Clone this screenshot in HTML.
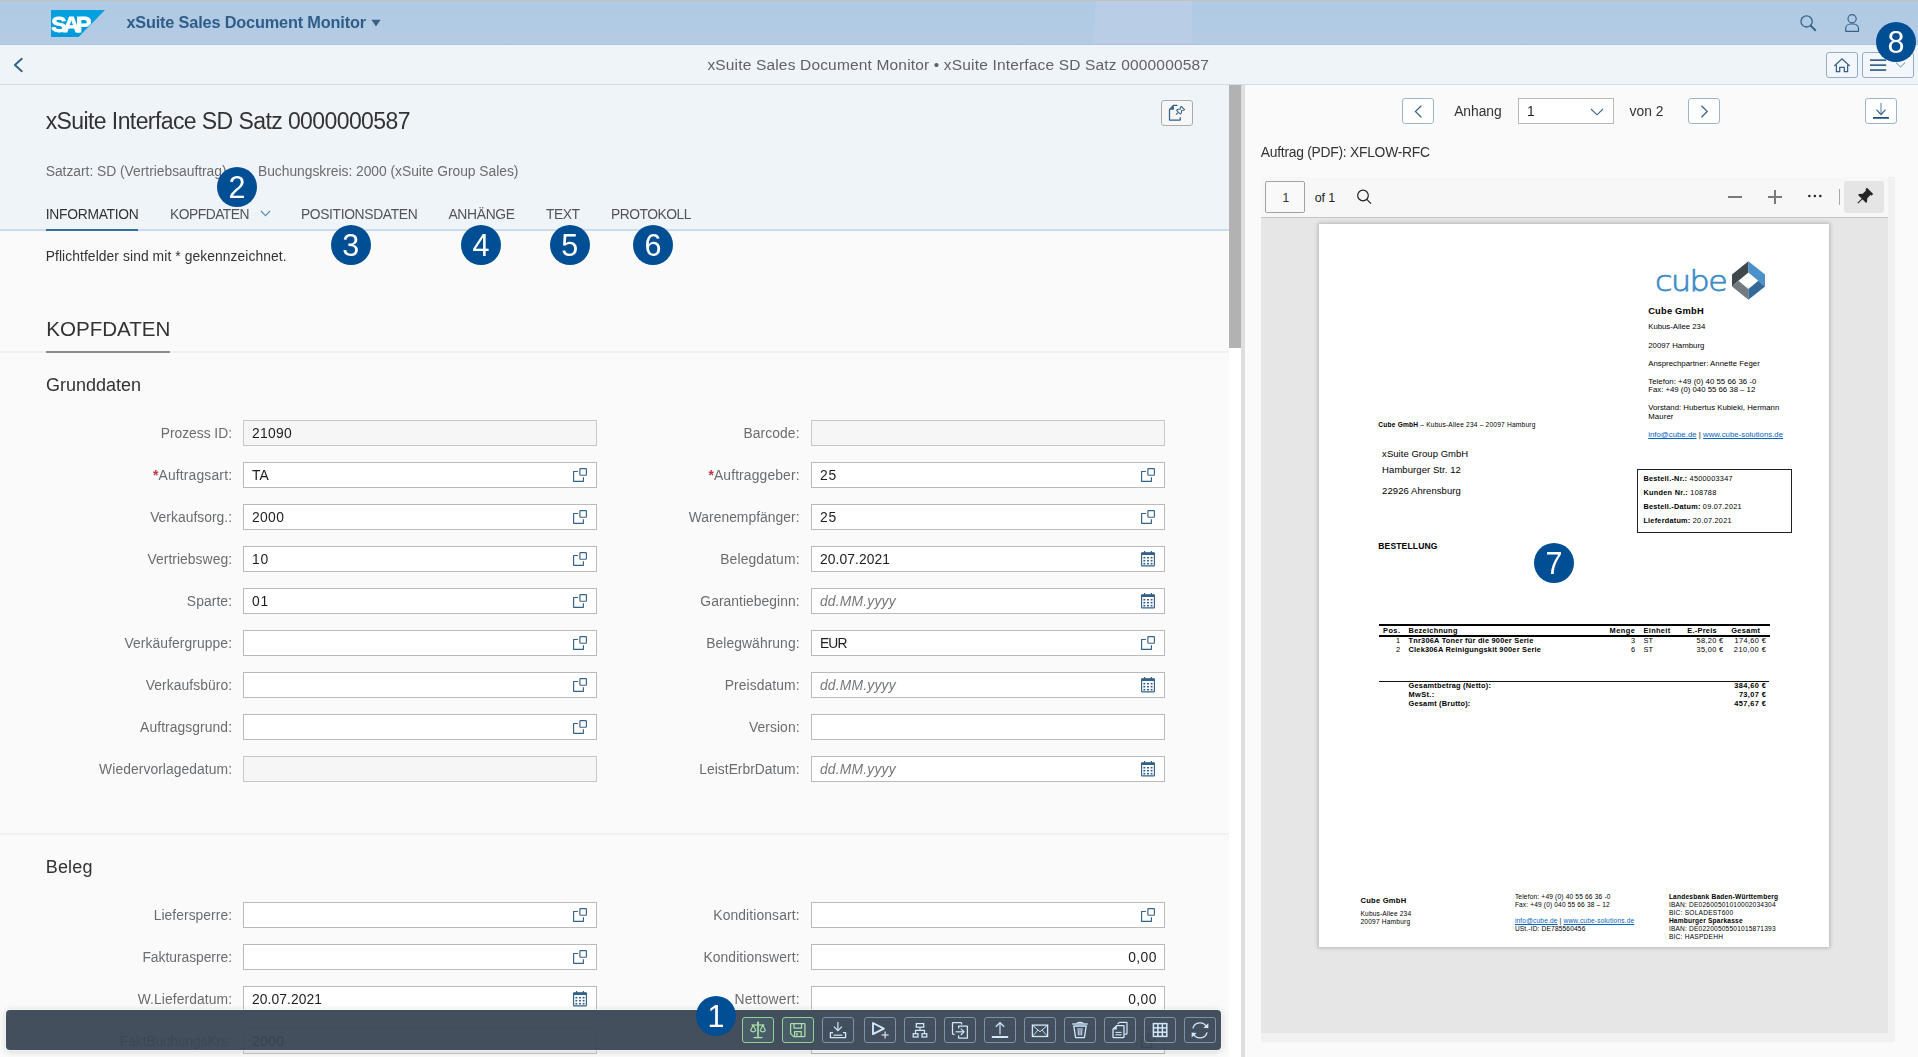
<!DOCTYPE html>
<html lang="de">
<head>
<meta charset="utf-8">
<title>xSuite Sales Document Monitor</title>
<style>
html,body{margin:0;padding:0}
body{width:1918px;height:1057px;overflow:hidden;position:relative;background:#fafafa;font-family:"Liberation Sans",Arial,sans-serif;color:#333;font-size:14px}
div,svg,.t,header,section,footer,nav,h1,h2,h3,label,a,button{position:absolute;margin:0;padding:0;box-sizing:border-box}
.t{white-space:nowrap;font-weight:400}
.btn{border:1px solid #93adc8;border-radius:3px;background:#f3f7fb}
.btn.w{background:#fff;border-color:#9db5cd}
.inp{border:1px solid #bababa;background:#fff}
.inp.ro{background:#f6f6f6;border-color:#c8c8c8}
.lbl{color:#6a6d70}
.val{color:#1d1d1d}
.ph{color:#74777a;font-style:italic}
.badge{border-radius:50%;background:#004e94;width:40px;height:40px}
.badge .t{color:#fff}
svg{overflow:visible}
.ui{left:0;top:0;width:1918px;height:1057px;will-change:transform}
.tb{border:1px solid #7d92a6;border-radius:3px}
.tb.g{border-color:#8dd28e;background:#4a5b68}
</style>
</head>
<body>
<div class="ui">
<header style="left:0;top:0;width:1918px;height:45px;background:linear-gradient(#afcae4,#b4cbe3);border-bottom:1px solid #abc5e1">
<div style="left:0;top:0;width:1918px;height:1px;background:#c3c1bf"></div>
<svg style="left:1080px;top:1px" width="120" height="43" viewBox="0 0 120 43"><polygon points="16.2,0 111.6,0 112.7,43 12.8,43" fill="#b9cee6"/></svg>
<svg style="left:51px;top:10px" width="54" height="27" viewBox="0 0 54 27"><defs><linearGradient id="sapg" x1="0" y1="0" x2="0" y2="1"><stop offset="0" stop-color="#00a1e0"/><stop offset="1" stop-color="#009ad9"/></linearGradient></defs><polygon points="0,0 54,0 27.6,27 0,27" fill="url(#sapg)"/><text x="0.2" y="22.1" font-family="Liberation Sans, Arial, sans-serif" font-weight="700" font-size="22.6" fill="#fff" textLength="36.6" lengthAdjust="spacingAndGlyphs" letter-spacing="-3.6" stroke="#fff" stroke-width="0.8">SAP</text></svg>
</header>
<span class="t" style="top:12.00px;font-size:16.3px;line-height:21px;left:126.40px;color:#2f5d87;font-weight:700;letter-spacing:-0.166px;">xSuite Sales Document Monitor</span>
<svg style="left:371px;top:19px" width="10" height="8" viewBox="0 0 10 8"><polygon points="0.4,0.8 9.6,0.8 5,7.4" fill="#346187"/></svg>
<svg style="left:1800px;top:15px" width="16" height="16" viewBox="0 0 16 16"><circle cx="6.6" cy="6.4" r="5.6" fill="none" stroke="#346187" stroke-width="1.3"/><line x1="10.6" y1="10.6" x2="15.3" y2="15.2" stroke="#346187" stroke-width="1.9" stroke-linecap="round"/></svg>
<svg style="left:1845px;top:14px" width="15" height="18" viewBox="0 0 15 18"><circle cx="7.1" cy="4.7" r="4.1" fill="none" stroke="#346187" stroke-width="1.15"/><path d="M0.7,17.3 V14.6 A4.6,4.6 0 0 1 5.3,10 H8.9 A4.6,4.6 0 0 1 13.5,14.6 V17.3 Z" fill="none" stroke="#346187" stroke-width="1.15" stroke-linejoin="round"/></svg>
<div style="left:0;top:45px;width:1918px;height:40px;background:#eff4f9;border-bottom:1px solid #d0deec"></div>
<svg style="left:13px;top:57px" width="11" height="16" viewBox="0 0 11 16"><polyline points="8.8,1.8 1.9,8 8.8,14.2" fill="none" stroke="#346187" stroke-width="1.9" stroke-linecap="round" stroke-linejoin="round"/></svg>
<span class="t" style="top:55.00px;font-size:15.5px;line-height:20px;left:707.40px;color:#5f6266;letter-spacing:0.167px;">xSuite Sales Document Monitor • xSuite Interface SD Satz 0000000587</span>
<div class="btn" style="left:1826px;top:52px;width:32px;height:26px"><svg style="left:7px;top:5px" width="16" height="15" viewBox="0 0 16 15"><polyline points="0.3,8 8,0.9 15.7,8" fill="none" stroke="#346187" stroke-width="1.25" stroke-linejoin="miter"/><path d="M2.4,6.9 V13.5 H5.7 V9.3 H10.3 V13.5 H13.6 V6.9" fill="none" stroke="#346187" stroke-width="1.25"/></svg></div>
<div class="btn" style="left:1862px;top:52px;width:52px;height:26px"><svg style="left:7px;top:5px" width="36" height="14" viewBox="0 0 36 14"><rect x="0" y="1.3" width="16.2" height="1.7" fill="#346187"/><rect x="0" y="6.3" width="16.2" height="1.7" fill="#346187"/><rect x="0" y="11.2" width="16.2" height="1.7" fill="#346187"/><polyline points="26,4.6 30.5,9 35,4.6" fill="none" stroke="#5b87b0" stroke-width="1"/></svg></div>
<section style="left:0;top:85px;width:1229px;height:146px;background:#eff4f9;border-bottom:2px solid #cddcec"></section>
<h1 class="t" style="top:106.00px;font-size:23px;line-height:30px;left:45.70px;color:#333;letter-spacing:-0.590px;">xSuite Interface SD Satz 0000000587</h1>
<div class="btn" style="left:1161px;top:100px;width:32px;height:26px;border-color:#ababab;background:#f7f7f7"><svg style="left:4px;top:3px" width="20" height="18" viewBox="0 0 20 18"><path d="M11,1.3 H7.6 L3.5,5.4 V16 H14.2 V13.6" fill="none" stroke="#346187" stroke-width="1.25" stroke-linejoin="round" stroke-linecap="round"/><polygon points="7.9,1.6 7.9,5.7 3.8,5.7" fill="#346187"/><path d="M15.3,2.3 L18.6,5.6 L17.4,6.2 L15.6,6.4 L15.3,9.2 L14.2,10 L10.6,6.4 L11.4,5.4 L14.2,5.1 L14.5,3.3 Z" fill="none" stroke="#346187" stroke-width="1.05" stroke-linejoin="round"/><line x1="12.3" y1="8.3" x2="10" y2="10.6" stroke="#346187" stroke-width="1.1"/></svg></div>
<span class="t" style="top:162.00px;font-size:13.85px;line-height:18px;left:45.70px;color:#6a6d70;letter-spacing:-0.024px;">Satzart: SD (Vertriebsauftrag)</span>
<span class="t" style="top:162.00px;font-size:13.85px;line-height:18px;left:258.00px;color:#6a6d70;letter-spacing:-0.032px;">Buchungskreis: 2000 (xSuite Group Sales)</span>
<span class="t" style="top:205.00px;font-size:13.85px;line-height:18px;left:45.70px;color:#333;letter-spacing:-0.269px;">INFORMATION</span>
<span class="t" style="top:205.00px;font-size:13.85px;line-height:18px;left:169.90px;color:#515559;letter-spacing:-0.489px;">KOPFDATEN</span>
<span class="t" style="top:205.00px;font-size:13.85px;line-height:18px;left:300.90px;color:#515559;letter-spacing:-0.346px;">POSITIONSDATEN</span>
<span class="t" style="top:205.00px;font-size:13.85px;line-height:18px;left:448.40px;color:#515559;letter-spacing:-0.297px;">ANHÄNGE</span>
<span class="t" style="top:205.00px;font-size:13.85px;line-height:18px;left:546.10px;color:#515559;letter-spacing:-0.535px;">TEXT</span>
<span class="t" style="top:205.00px;font-size:13.85px;line-height:18px;left:611.10px;color:#515559;letter-spacing:-0.511px;">PROTOKOLL</span>
<div style="left:46px;top:229px;width:92px;height:2px;background:#306ea6"></div>
<svg style="left:260px;top:210px" width="11" height="7" viewBox="0 0 11 7"><polyline points="1,1 5.5,5.6 10,1" fill="none" stroke="#5b87b0" stroke-width="1.1"/></svg>
<span class="t" style="top:247.00px;font-size:13.85px;line-height:18px;left:45.70px;color:#333;letter-spacing:0.080px;">Pflichtfelder sind mit * gekennzeichnet.</span>
<h2 class="t" style="top:315.00px;font-size:20.6px;line-height:27px;left:46.30px;color:#333;letter-spacing:-0.023px;">KOPFDATEN</h2>
<div style="left:0;top:351px;width:1229px;height:2px;background:#f0f0f0"></div>
<div style="left:46px;top:351px;width:124px;height:2px;background:#8a8a8a"></div>
<h3 class="t" style="top:374.00px;font-size:18px;line-height:23px;left:46.10px;color:#333;letter-spacing:-0.020px;">Grunddaten</h3>
<label class="t lbl" style="top:424.00px;font-size:13.85px;line-height:18px;right:1686.03px;letter-spacing:-0.026px;">Prozess ID:</label>
<div class="inp ro" style="left:243px;top:420px;width:354px;height:26px"></div>
<span class="t val" style="top:424.00px;font-size:13.85px;line-height:18px;left:251.90px;letter-spacing:0.321px;">21090</span>
<label class="t lbl" style="top:466.00px;font-size:13.85px;line-height:18px;right:1685.82px;letter-spacing:0.178px;"><span style="color:#c0393b;font-weight:700">*</span>Auftragsart:</label>
<div class="inp" style="left:243px;top:462px;width:354px;height:26px"><svg style="left:329.2px;top:5px" width="14" height="14" viewBox="0 0 14 14"><rect x="6.9" y="0.6" width="6.5" height="6.6" fill="none" stroke="#346187" stroke-width="1.15" rx="0.6"/><path d="M5,3.5 H0.6 V13.3 H10.4 V9.2" fill="none" stroke="#346187" stroke-width="1.15" stroke-linejoin="round"/></svg></div>
<span class="t val" style="top:466.00px;font-size:13.85px;line-height:18px;left:251.90px;letter-spacing:0.213px;">TA</span>
<label class="t lbl" style="top:508.00px;font-size:13.85px;line-height:18px;right:1685.97px;letter-spacing:0.026px;">Verkaufsorg.:</label>
<div class="inp" style="left:243px;top:504px;width:354px;height:26px"><svg style="left:329.2px;top:5px" width="14" height="14" viewBox="0 0 14 14"><rect x="6.9" y="0.6" width="6.5" height="6.6" fill="none" stroke="#346187" stroke-width="1.15" rx="0.6"/><path d="M5,3.5 H0.6 V13.3 H10.4 V9.2" fill="none" stroke="#346187" stroke-width="1.15" stroke-linejoin="round"/></svg></div>
<span class="t val" style="top:508.00px;font-size:13.85px;line-height:18px;left:251.90px;letter-spacing:0.391px;">2000</span>
<label class="t lbl" style="top:550.00px;font-size:13.85px;line-height:18px;right:1685.94px;letter-spacing:0.059px;">Vertriebsweg:</label>
<div class="inp" style="left:243px;top:546px;width:354px;height:26px"><svg style="left:329.2px;top:5px" width="14" height="14" viewBox="0 0 14 14"><rect x="6.9" y="0.6" width="6.5" height="6.6" fill="none" stroke="#346187" stroke-width="1.15" rx="0.6"/><path d="M5,3.5 H0.6 V13.3 H10.4 V9.2" fill="none" stroke="#346187" stroke-width="1.15" stroke-linejoin="round"/></svg></div>
<span class="t val" style="top:550.00px;font-size:13.85px;line-height:18px;left:251.90px;letter-spacing:0.979px;">10</span>
<label class="t lbl" style="top:592.00px;font-size:13.85px;line-height:18px;right:1685.91px;letter-spacing:0.091px;">Sparte:</label>
<div class="inp" style="left:243px;top:588px;width:354px;height:26px"><svg style="left:329.2px;top:5px" width="14" height="14" viewBox="0 0 14 14"><rect x="6.9" y="0.6" width="6.5" height="6.6" fill="none" stroke="#346187" stroke-width="1.15" rx="0.6"/><path d="M5,3.5 H0.6 V13.3 H10.4 V9.2" fill="none" stroke="#346187" stroke-width="1.15" stroke-linejoin="round"/></svg></div>
<span class="t val" style="top:592.00px;font-size:13.85px;line-height:18px;left:251.90px;letter-spacing:0.979px;">01</span>
<label class="t lbl" style="top:634.00px;font-size:13.85px;line-height:18px;right:1685.92px;letter-spacing:0.084px;">Verkäufergruppe:</label>
<div class="inp" style="left:243px;top:630px;width:354px;height:26px"><svg style="left:329.2px;top:5px" width="14" height="14" viewBox="0 0 14 14"><rect x="6.9" y="0.6" width="6.5" height="6.6" fill="none" stroke="#346187" stroke-width="1.15" rx="0.6"/><path d="M5,3.5 H0.6 V13.3 H10.4 V9.2" fill="none" stroke="#346187" stroke-width="1.15" stroke-linejoin="round"/></svg></div>
<label class="t lbl" style="top:676.00px;font-size:13.85px;line-height:18px;right:1685.92px;letter-spacing:0.080px;">Verkaufsbüro:</label>
<div class="inp" style="left:243px;top:672px;width:354px;height:26px"><svg style="left:329.2px;top:5px" width="14" height="14" viewBox="0 0 14 14"><rect x="6.9" y="0.6" width="6.5" height="6.6" fill="none" stroke="#346187" stroke-width="1.15" rx="0.6"/><path d="M5,3.5 H0.6 V13.3 H10.4 V9.2" fill="none" stroke="#346187" stroke-width="1.15" stroke-linejoin="round"/></svg></div>
<label class="t lbl" style="top:718.00px;font-size:13.85px;line-height:18px;right:1685.92px;letter-spacing:0.083px;">Auftragsgrund:</label>
<div class="inp" style="left:243px;top:714px;width:354px;height:26px"><svg style="left:329.2px;top:5px" width="14" height="14" viewBox="0 0 14 14"><rect x="6.9" y="0.6" width="6.5" height="6.6" fill="none" stroke="#346187" stroke-width="1.15" rx="0.6"/><path d="M5,3.5 H0.6 V13.3 H10.4 V9.2" fill="none" stroke="#346187" stroke-width="1.15" stroke-linejoin="round"/></svg></div>
<label class="t lbl" style="top:760.00px;font-size:13.85px;line-height:18px;right:1685.93px;letter-spacing:0.073px;">Wiedervorlagedatum:</label>
<div class="inp ro" style="left:243px;top:756px;width:354px;height:26px"></div>
<label class="t lbl" style="top:424.00px;font-size:13.85px;line-height:18px;right:1118.41px;letter-spacing:0.095px;">Barcode:</label>
<div class="inp ro" style="left:811px;top:420px;width:354px;height:26px"></div>
<label class="t lbl" style="top:466.00px;font-size:13.85px;line-height:18px;right:1118.36px;letter-spacing:0.139px;"><span style="color:#c0393b;font-weight:700">*</span>Auftraggeber:</label>
<div class="inp" style="left:811px;top:462px;width:354px;height:26px"><svg style="left:329.2px;top:5px" width="14" height="14" viewBox="0 0 14 14"><rect x="6.9" y="0.6" width="6.5" height="6.6" fill="none" stroke="#346187" stroke-width="1.15" rx="0.6"/><path d="M5,3.5 H0.6 V13.3 H10.4 V9.2" fill="none" stroke="#346187" stroke-width="1.15" stroke-linejoin="round"/></svg></div>
<span class="t val" style="top:466.00px;font-size:13.85px;line-height:18px;left:819.90px;letter-spacing:0.879px;">25</span>
<label class="t lbl" style="top:508.00px;font-size:13.85px;line-height:18px;right:1118.47px;letter-spacing:0.035px;">Warenempfänger:</label>
<div class="inp" style="left:811px;top:504px;width:354px;height:26px"><svg style="left:329.2px;top:5px" width="14" height="14" viewBox="0 0 14 14"><rect x="6.9" y="0.6" width="6.5" height="6.6" fill="none" stroke="#346187" stroke-width="1.15" rx="0.6"/><path d="M5,3.5 H0.6 V13.3 H10.4 V9.2" fill="none" stroke="#346187" stroke-width="1.15" stroke-linejoin="round"/></svg></div>
<span class="t val" style="top:508.00px;font-size:13.85px;line-height:18px;left:819.90px;letter-spacing:0.879px;">25</span>
<label class="t lbl" style="top:550.00px;font-size:13.85px;line-height:18px;right:1118.33px;letter-spacing:0.165px;">Belegdatum:</label>
<div class="inp" style="left:811px;top:546px;width:354px;height:26px"><svg style="left:329px;top:4px" width="14" height="16" viewBox="0 0 14 16"><rect x="0.6" y="1.7" width="12.8" height="13.2" fill="none" stroke="#346187" stroke-width="1.15" rx="0.6"/><rect x="0.6" y="1.7" width="12.8" height="2.3" fill="#346187"/><rect x="3" y="0" width="1.2" height="2" fill="#346187"/><rect x="9.8" y="0" width="1.2" height="2" fill="#346187"/><rect x="2.4" y="5.9" width="1.9" height="1.6" fill="#346187"/><rect x="6.0" y="5.9" width="1.9" height="1.6" fill="#346187"/><rect x="9.6" y="5.9" width="1.9" height="1.6" fill="#346187"/><rect x="2.4" y="8.9" width="1.9" height="1.6" fill="#346187"/><rect x="6.0" y="8.9" width="1.9" height="1.6" fill="#346187"/><rect x="9.6" y="8.9" width="1.9" height="1.6" fill="#346187"/><rect x="2.4" y="11.9" width="1.9" height="1.6" fill="#346187"/><rect x="6.0" y="11.9" width="1.9" height="1.6" fill="#346187"/><rect x="9.6" y="11.9" width="1.9" height="1.6" fill="#346187"/></svg></div>
<span class="t val" style="top:550.00px;font-size:13.85px;line-height:18px;left:819.90px;letter-spacing:0.099px;">20.07.2021</span>
<label class="t lbl" style="top:592.00px;font-size:13.85px;line-height:18px;right:1118.45px;letter-spacing:0.048px;">Garantiebeginn:</label>
<div class="inp" style="left:811px;top:588px;width:354px;height:26px"><svg style="left:329px;top:4px" width="14" height="16" viewBox="0 0 14 16"><rect x="0.6" y="1.7" width="12.8" height="13.2" fill="none" stroke="#346187" stroke-width="1.15" rx="0.6"/><rect x="0.6" y="1.7" width="12.8" height="2.3" fill="#346187"/><rect x="3" y="0" width="1.2" height="2" fill="#346187"/><rect x="9.8" y="0" width="1.2" height="2" fill="#346187"/><rect x="2.4" y="5.9" width="1.9" height="1.6" fill="#346187"/><rect x="6.0" y="5.9" width="1.9" height="1.6" fill="#346187"/><rect x="9.6" y="5.9" width="1.9" height="1.6" fill="#346187"/><rect x="2.4" y="8.9" width="1.9" height="1.6" fill="#346187"/><rect x="6.0" y="8.9" width="1.9" height="1.6" fill="#346187"/><rect x="9.6" y="8.9" width="1.9" height="1.6" fill="#346187"/><rect x="2.4" y="11.9" width="1.9" height="1.6" fill="#346187"/><rect x="6.0" y="11.9" width="1.9" height="1.6" fill="#346187"/><rect x="9.6" y="11.9" width="1.9" height="1.6" fill="#346187"/></svg></div>
<span class="t ph" style="top:592.00px;font-size:13.85px;line-height:18px;left:819.90px;letter-spacing:0.205px;">dd.MM.yyyy</span>
<label class="t lbl" style="top:634.00px;font-size:13.85px;line-height:18px;right:1118.42px;letter-spacing:0.077px;">Belegwährung:</label>
<div class="inp" style="left:811px;top:630px;width:354px;height:26px"><svg style="left:329.2px;top:5px" width="14" height="14" viewBox="0 0 14 14"><rect x="6.9" y="0.6" width="6.5" height="6.6" fill="none" stroke="#346187" stroke-width="1.15" rx="0.6"/><path d="M5,3.5 H0.6 V13.3 H10.4 V9.2" fill="none" stroke="#346187" stroke-width="1.15" stroke-linejoin="round"/></svg></div>
<span class="t val" style="top:634.00px;font-size:13.85px;line-height:18px;left:819.90px;letter-spacing:-0.825px;">EUR</span>
<label class="t lbl" style="top:676.00px;font-size:13.85px;line-height:18px;right:1118.41px;letter-spacing:0.091px;">Preisdatum:</label>
<div class="inp" style="left:811px;top:672px;width:354px;height:26px"><svg style="left:329px;top:4px" width="14" height="16" viewBox="0 0 14 16"><rect x="0.6" y="1.7" width="12.8" height="13.2" fill="none" stroke="#346187" stroke-width="1.15" rx="0.6"/><rect x="0.6" y="1.7" width="12.8" height="2.3" fill="#346187"/><rect x="3" y="0" width="1.2" height="2" fill="#346187"/><rect x="9.8" y="0" width="1.2" height="2" fill="#346187"/><rect x="2.4" y="5.9" width="1.9" height="1.6" fill="#346187"/><rect x="6.0" y="5.9" width="1.9" height="1.6" fill="#346187"/><rect x="9.6" y="5.9" width="1.9" height="1.6" fill="#346187"/><rect x="2.4" y="8.9" width="1.9" height="1.6" fill="#346187"/><rect x="6.0" y="8.9" width="1.9" height="1.6" fill="#346187"/><rect x="9.6" y="8.9" width="1.9" height="1.6" fill="#346187"/><rect x="2.4" y="11.9" width="1.9" height="1.6" fill="#346187"/><rect x="6.0" y="11.9" width="1.9" height="1.6" fill="#346187"/><rect x="9.6" y="11.9" width="1.9" height="1.6" fill="#346187"/></svg></div>
<span class="t ph" style="top:676.00px;font-size:13.85px;line-height:18px;left:819.90px;letter-spacing:0.205px;">dd.MM.yyyy</span>
<label class="t lbl" style="top:718.00px;font-size:13.85px;line-height:18px;right:1118.42px;letter-spacing:0.079px;">Version:</label>
<div class="inp" style="left:811px;top:714px;width:354px;height:26px"></div>
<label class="t lbl" style="top:760.00px;font-size:13.85px;line-height:18px;right:1118.49px;letter-spacing:0.011px;">LeistErbrDatum:</label>
<div class="inp" style="left:811px;top:756px;width:354px;height:26px"><svg style="left:329px;top:4px" width="14" height="16" viewBox="0 0 14 16"><rect x="0.6" y="1.7" width="12.8" height="13.2" fill="none" stroke="#346187" stroke-width="1.15" rx="0.6"/><rect x="0.6" y="1.7" width="12.8" height="2.3" fill="#346187"/><rect x="3" y="0" width="1.2" height="2" fill="#346187"/><rect x="9.8" y="0" width="1.2" height="2" fill="#346187"/><rect x="2.4" y="5.9" width="1.9" height="1.6" fill="#346187"/><rect x="6.0" y="5.9" width="1.9" height="1.6" fill="#346187"/><rect x="9.6" y="5.9" width="1.9" height="1.6" fill="#346187"/><rect x="2.4" y="8.9" width="1.9" height="1.6" fill="#346187"/><rect x="6.0" y="8.9" width="1.9" height="1.6" fill="#346187"/><rect x="9.6" y="8.9" width="1.9" height="1.6" fill="#346187"/><rect x="2.4" y="11.9" width="1.9" height="1.6" fill="#346187"/><rect x="6.0" y="11.9" width="1.9" height="1.6" fill="#346187"/><rect x="9.6" y="11.9" width="1.9" height="1.6" fill="#346187"/></svg></div>
<span class="t ph" style="top:760.00px;font-size:13.85px;line-height:18px;left:819.90px;letter-spacing:0.205px;">dd.MM.yyyy</span>
<div style="left:0;top:833px;width:1229px;height:2px;background:#f1f1f1"></div>
<h3 class="t" style="top:856.00px;font-size:18px;line-height:23px;left:45.70px;color:#333;letter-spacing:0.188px;">Beleg</h3>
<label class="t lbl" style="top:906.00px;font-size:13.85px;line-height:18px;right:1685.95px;letter-spacing:0.047px;">Liefersperre:</label>
<div class="inp" style="left:243px;top:902px;width:354px;height:26px"><svg style="left:329.2px;top:5px" width="14" height="14" viewBox="0 0 14 14"><rect x="6.9" y="0.6" width="6.5" height="6.6" fill="none" stroke="#346187" stroke-width="1.15" rx="0.6"/><path d="M5,3.5 H0.6 V13.3 H10.4 V9.2" fill="none" stroke="#346187" stroke-width="1.15" stroke-linejoin="round"/></svg></div>
<label class="t lbl" style="top:948.00px;font-size:13.85px;line-height:18px;right:1686.03px;letter-spacing:-0.034px;">Fakturasperre:</label>
<div class="inp" style="left:243px;top:944px;width:354px;height:26px"><svg style="left:329.2px;top:5px" width="14" height="14" viewBox="0 0 14 14"><rect x="6.9" y="0.6" width="6.5" height="6.6" fill="none" stroke="#346187" stroke-width="1.15" rx="0.6"/><path d="M5,3.5 H0.6 V13.3 H10.4 V9.2" fill="none" stroke="#346187" stroke-width="1.15" stroke-linejoin="round"/></svg></div>
<label class="t lbl" style="top:990.00px;font-size:13.85px;line-height:18px;right:1685.90px;letter-spacing:0.098px;">W.Lieferdatum:</label>
<div class="inp" style="left:243px;top:986px;width:354px;height:26px"><svg style="left:329px;top:4px" width="14" height="16" viewBox="0 0 14 16"><rect x="0.6" y="1.7" width="12.8" height="13.2" fill="none" stroke="#346187" stroke-width="1.15" rx="0.6"/><rect x="0.6" y="1.7" width="12.8" height="2.3" fill="#346187"/><rect x="3" y="0" width="1.2" height="2" fill="#346187"/><rect x="9.8" y="0" width="1.2" height="2" fill="#346187"/><rect x="2.4" y="5.9" width="1.9" height="1.6" fill="#346187"/><rect x="6.0" y="5.9" width="1.9" height="1.6" fill="#346187"/><rect x="9.6" y="5.9" width="1.9" height="1.6" fill="#346187"/><rect x="2.4" y="8.9" width="1.9" height="1.6" fill="#346187"/><rect x="6.0" y="8.9" width="1.9" height="1.6" fill="#346187"/><rect x="9.6" y="8.9" width="1.9" height="1.6" fill="#346187"/><rect x="2.4" y="11.9" width="1.9" height="1.6" fill="#346187"/><rect x="6.0" y="11.9" width="1.9" height="1.6" fill="#346187"/><rect x="9.6" y="11.9" width="1.9" height="1.6" fill="#346187"/></svg></div>
<span class="t val" style="top:990.00px;font-size:13.85px;line-height:18px;left:251.90px;letter-spacing:0.099px;">20.07.2021</span>
<label class="t lbl" style="top:1032.00px;font-size:13.85px;line-height:18px;right:1686.06px;letter-spacing:-0.062px;">FaktBuchungsKrs:</label>
<div class="inp ro" style="left:243px;top:1028px;width:354px;height:26px"></div>
<span class="t val" style="top:1032.00px;font-size:13.85px;line-height:18px;left:251.90px;letter-spacing:0.391px;">2000</span>
<label class="t lbl" style="top:906.00px;font-size:13.85px;line-height:18px;right:1118.38px;letter-spacing:0.118px;">Konditionsart:</label>
<div class="inp" style="left:811px;top:902px;width:354px;height:26px"><svg style="left:329.2px;top:5px" width="14" height="14" viewBox="0 0 14 14"><rect x="6.9" y="0.6" width="6.5" height="6.6" fill="none" stroke="#346187" stroke-width="1.15" rx="0.6"/><path d="M5,3.5 H0.6 V13.3 H10.4 V9.2" fill="none" stroke="#346187" stroke-width="1.15" stroke-linejoin="round"/></svg></div>
<label class="t lbl" style="top:948.00px;font-size:13.85px;line-height:18px;right:1118.40px;letter-spacing:0.102px;">Konditionswert:</label>
<div class="inp" style="left:811px;top:944px;width:354px;height:26px"></div>
<span class="t val" style="top:948.00px;font-size:13.85px;line-height:18px;right:761.02px;letter-spacing:0.477px;">0,00</span>
<label class="t lbl" style="top:990.00px;font-size:13.85px;line-height:18px;right:1118.28px;letter-spacing:0.221px;">Nettowert:</label>
<div class="inp" style="left:811px;top:986px;width:354px;height:26px"></div>
<span class="t val" style="top:990.00px;font-size:13.85px;line-height:18px;right:761.02px;letter-spacing:0.477px;">0,00</span>
<div class="inp" style="left:811px;top:1028px;width:354px;height:26px"><svg style="left:329.2px;top:5px" width="14" height="14" viewBox="0 0 14 14"><rect x="6.9" y="0.6" width="6.5" height="6.6" fill="none" stroke="#346187" stroke-width="1.15" rx="0.6"/><path d="M5,3.5 H0.6 V13.3 H10.4 V9.2" fill="none" stroke="#346187" stroke-width="1.15" stroke-linejoin="round"/></svg></div>
<div style="left:1229px;top:85px;width:12px;height:972px;background:#fff"></div>
<div style="left:1229px;top:85px;width:12px;height:263px;background:#b2b2b2"></div>
<div style="left:1241px;top:85px;width:4px;height:972px;background:#dedede"></div>
<div class="btn w" style="left:1402px;top:98px;width:32px;height:26px"><svg style="left:11.2px;top:6px" width="9" height="13" viewBox="0 0 9 13"><polyline points="7.3,0.8 1.4,6.5 7.3,12.2" fill="none" stroke="#346187" stroke-width="1.2"/></svg></div>
<span class="t" style="top:102.00px;font-size:13.85px;line-height:18px;left:1454.20px;color:#333;letter-spacing:-0.050px;">Anhang</span>
<div class="inp" style="left:1518px;top:98px;width:96px;height:26px;border-color:#b8b8b8"><svg style="left:71px;top:9px" width="14" height="8" viewBox="0 0 14 8"><polyline points="1,1 7,6.8 13,1" fill="none" stroke="#346187" stroke-width="1.05"/></svg></div>
<span class="t" style="top:102.00px;font-size:13.85px;line-height:18px;left:1527.00px;color:#1d1d1d;">1</span>
<span class="t" style="top:102.00px;font-size:13.85px;line-height:18px;left:1629.40px;color:#333;letter-spacing:0.077px;">von 2</span>
<div class="btn w" style="left:1688px;top:98px;width:32px;height:26px"><svg style="left:10.6px;top:6px" width="9" height="13" viewBox="0 0 9 13"><polyline points="1.4,0.8 7.3,6.5 1.4,12.2" fill="none" stroke="#346187" stroke-width="1.2"/></svg></div>
<div class="btn w" style="left:1865px;top:98px;width:32px;height:26px"><svg style="left:7px;top:4px" width="16" height="16" viewBox="0 0 16 16"><line x1="8" y1="0" x2="8" y2="11.2" stroke="#346187" stroke-width="1.1" opacity="0.75"/><polyline points="3.9,7.1 8,11.6 12.1,7.1" fill="none" stroke="#346187" stroke-width="1.3" stroke-linecap="round"/><rect x="0" y="14.1" width="16" height="1.7" rx="0.5" fill="#1f4e79"/></svg></div>
<span class="t" style="top:143.00px;font-size:13.85px;line-height:18px;left:1260.80px;color:#333;letter-spacing:-0.258px;">Auftrag (PDF): XFLOW-RFC</span>
</div>
<div style="left:1261px;top:177px;width:627px;height:41px;background:#f7f7f7;border-bottom:1px solid #c6c6c6"></div>
<div style="left:1888px;top:177px;width:7px;height:864px;background:#f1f1f1"></div>
<div style="left:1261px;top:1033px;width:634px;height:9px;background:#f1f1f1"></div>
<div style="left:1265px;top:181px;width:40px;height:32px;border:1px solid #a2a2a2;border-radius:2px;background:#f9f9f9"></div>
<span class="t" style="top:190.00px;font-size:12px;line-height:16px;left:1282.60px;color:#333;">1</span>
<span class="t" style="top:190.00px;font-size:12.5px;line-height:16px;left:1314.70px;color:#262626;letter-spacing:-0.136px;">of 1</span>
<svg style="left:1356px;top:189px" width="16" height="16" viewBox="0 0 16 16"><circle cx="7" cy="6.5" r="5.3" fill="none" stroke="#222" stroke-width="1.2"/><line x1="10.8" y1="10.4" x2="15" y2="14.7" stroke="#222" stroke-width="1.2"/></svg>
<div style="left:1728px;top:196px;width:14px;height:2px;background:#7a7a7a"></div>
<div style="left:1768px;top:196px;width:14px;height:2px;background:#7a7a7a"></div>
<div style="left:1774px;top:190px;width:2px;height:14px;background:#7a7a7a"></div>
<svg style="left:1807px;top:193px" width="16" height="6" viewBox="0 0 16 6"><circle cx="2.4" cy="3" r="1.25" fill="#222"/><circle cx="7.8" cy="3" r="1.25" fill="#222"/><circle cx="13.3" cy="3" r="1.25" fill="#222"/></svg>
<div style="left:1839px;top:189px;width:1px;height:16px;background:#a8a8a8"></div>
<div style="left:1844px;top:181px;width:40px;height:32px;background:#e5e5e5;border-radius:3px"></div>
<svg style="left:1854.9px;top:187.9px" width="18" height="18" viewBox="0 0 18 18"><g transform="rotate(45 9 9)"><path d="M4.6,0.4 H13.4 V2.7 H12.2 V7.6 L14.7,10.4 V11.7 H3.3 V10.4 L5.8,7.6 V2.7 H4.6 Z" fill="#262626"/><rect x="8.45" y="11.5" width="1.1" height="6.3" fill="#262626"/></g></svg>
<div style="left:1261px;top:218px;width:627px;height:815px;background:#e6e6e6;overflow:hidden">
<div style="left:58px;top:6px;width:510px;height:722.5px;background:#fff;box-shadow:0 0 4px 1px rgba(0,0,0,0.22)"></div>
</div>
<span class="t" style="top:262.00px;font-size:29px;line-height:38px;left:1654.60px;color:#3d8cc8;font-family:DejaVu Sans,Liberation Sans,sans-serif;font-weight:200;letter-spacing:-1.4px;-webkit-text-stroke:0.75px #3d8cc8;transform:scaleX(1.095);transform-origin:0 0;">cube</span>
<svg style="left:1731px;top:260px" width="36" height="41" viewBox="0 0 36 41"><polygon points="17.4,1.3 17.4,12.4 7.4,20.8 1,26.5 1,14.5" fill="#40484c"/><polygon points="17.4,1.3 34,14.5 34,26.5 27.3,20.8 17.4,12.4" fill="#4a90c9"/><polygon points="1,26.5 7.4,20.8 17.4,29.1 17.4,39.8" fill="#737b81"/><polygon points="34,26.5 27.3,20.8 17.4,29.1 17.4,39.8" fill="#35699a"/></svg>
<span class="t" style="top:305.00px;font-size:9.3px;line-height:12px;left:1648.20px;color:#000;font-weight:700;letter-spacing:0.214px;">Cube GmbH</span>
<span class="t" style="top:322.00px;font-size:7.8px;line-height:10px;left:1648.20px;color:#000;letter-spacing:-0.010px;">Kubus-Allee 234</span>
<span class="t" style="top:341.00px;font-size:7.8px;line-height:10px;left:1648.20px;color:#000;letter-spacing:0.022px;">20097 Hamburg</span>
<span class="t" style="top:359.00px;font-size:7.8px;line-height:10px;left:1648.20px;color:#000;letter-spacing:0.021px;">Ansprechpartner: Annette Feger</span>
<span class="t" style="top:377.00px;font-size:7.8px;line-height:10px;left:1648.20px;color:#000;letter-spacing:0.044px;">Telefon: +49 (0) 40 55 66 36 -0</span>
<span class="t" style="top:385.00px;font-size:7.8px;line-height:10px;left:1648.20px;color:#000;letter-spacing:-0.007px;">Fax: +49 (0) 040 55 66 38 – 12</span>
<span class="t" style="top:403.00px;font-size:7.8px;line-height:10px;left:1648.20px;color:#000;letter-spacing:0.006px;">Vorstand: Hubertus Kubieki, Hermann</span>
<span class="t" style="top:412.00px;font-size:7.8px;line-height:10px;left:1648.20px;color:#000;letter-spacing:0.115px;">Maurer</span>
<span class="t" style="top:430.00px;font-size:7.8px;line-height:10px;left:1648.20px;color:#000;letter-spacing:0.015px;"><a style="position:static;color:#0563c1;text-decoration:underline">info@cube.de</a> | <a style="position:static;color:#0563c1;text-decoration:underline">www.cube-solutions.de</a></span>
<span class="t" style="top:420.00px;font-size:6.6px;line-height:9px;left:1378.30px;color:#000;letter-spacing:0.205px;"><b>Cube GmbH</b> – Kubus-Allee 234 – 20097 Hamburg</span>
<span class="t" style="top:448.00px;font-size:9.5px;line-height:12px;left:1382.10px;color:#000;letter-spacing:0.038px;">xSuite Group GmbH</span>
<span class="t" style="top:464.00px;font-size:9.5px;line-height:12px;left:1382.10px;color:#000;letter-spacing:0.070px;">Hamburger Str. 12</span>
<span class="t" style="top:485.00px;font-size:9.5px;line-height:12px;left:1382.10px;color:#000;letter-spacing:0.073px;">22926 Ahrensburg</span>
<span class="t" style="top:541.00px;font-size:8.5px;line-height:11px;left:1378.30px;color:#000;font-weight:700;letter-spacing:0.158px;">BESTELLUNG</span>
<div style="left:1637px;top:469px;width:155px;height:64px;border:1.2px solid #222"></div>
<span class="t" style="top:474.00px;font-size:7.3px;line-height:9px;left:1643.40px;color:#000;letter-spacing:0.259px;"><b>Bestell.-Nr.:</b> 4500003347</span>
<span class="t" style="top:488.00px;font-size:7.3px;line-height:9px;left:1643.40px;color:#000;letter-spacing:0.299px;"><b>Kunden Nr.:</b> 108788</span>
<span class="t" style="top:502.00px;font-size:7.3px;line-height:9px;left:1643.40px;color:#000;letter-spacing:0.245px;"><b>Bestell.-Datum:</b> 09.07.2021</span>
<span class="t" style="top:516.00px;font-size:7.3px;line-height:9px;left:1643.40px;color:#000;letter-spacing:0.244px;"><b>Lieferdatum:</b> 20.07.2021</span>
<div style="left:1379px;top:624.3px;width:391px;height:1.7px;background:#000"></div>
<div style="left:1379px;top:635.1px;width:391px;height:1.8px;background:#000"></div>
<div style="left:1379px;top:680.7px;width:390px;height:1px;background:#111"></div>
<span class="t" style="top:626.00px;font-size:7.4px;line-height:10px;left:1383.10px;color:#000;font-weight:700;letter-spacing:0.410px;">Pos.</span>
<span class="t" style="top:626.00px;font-size:7.4px;line-height:10px;left:1408.50px;color:#000;font-weight:700;letter-spacing:0.294px;">Bezeichnung</span>
<span class="t" style="top:626.00px;font-size:7.4px;line-height:10px;left:1609.50px;color:#000;font-weight:700;letter-spacing:0.483px;">Menge</span>
<span class="t" style="top:626.00px;font-size:7.4px;line-height:10px;left:1643.50px;color:#000;font-weight:700;letter-spacing:0.333px;">Einheit</span>
<span class="t" style="top:626.00px;font-size:7.4px;line-height:10px;left:1687.20px;color:#000;font-weight:700;letter-spacing:0.287px;">E.-Preis</span>
<span class="t" style="top:626.00px;font-size:7.4px;line-height:10px;left:1731.30px;color:#000;font-weight:700;letter-spacing:0.323px;">Gesamt</span>
<span class="t" style="top:636.00px;font-size:7.4px;line-height:10px;right:517.90px;color:#000;">1</span>
<span class="t" style="top:636.00px;font-size:7.4px;line-height:10px;left:1408.50px;color:#000;font-weight:700;letter-spacing:0.227px;">Tnr306A Toner für die 900er Serie</span>
<span class="t" style="top:636.00px;font-size:7.4px;line-height:10px;right:282.80px;color:#000;">3</span>
<span class="t" style="top:636.00px;font-size:7.4px;line-height:10px;left:1643.50px;color:#000;letter-spacing:-0.013px;">ST</span>
<span class="t" style="top:636.00px;font-size:7.4px;line-height:10px;right:194.57px;color:#000;letter-spacing:0.328px;">58,20 €</span>
<span class="t" style="top:636.00px;font-size:7.4px;line-height:10px;right:151.83px;color:#000;letter-spacing:0.366px;">174,60 €</span>
<span class="t" style="top:645.00px;font-size:7.4px;line-height:10px;right:517.90px;color:#000;">2</span>
<span class="t" style="top:645.00px;font-size:7.4px;line-height:10px;left:1408.50px;color:#000;font-weight:700;letter-spacing:0.212px;">Clek306A Reinigungskit 900er Serie</span>
<span class="t" style="top:645.00px;font-size:7.4px;line-height:10px;right:282.80px;color:#000;">6</span>
<span class="t" style="top:645.00px;font-size:7.4px;line-height:10px;left:1643.50px;color:#000;letter-spacing:-0.013px;">ST</span>
<span class="t" style="top:645.00px;font-size:7.4px;line-height:10px;right:194.57px;color:#000;letter-spacing:0.328px;">35,00 €</span>
<span class="t" style="top:645.00px;font-size:7.4px;line-height:10px;right:151.75px;color:#000;letter-spacing:0.451px;">210,00 €</span>
<span class="t" style="top:681.00px;font-size:7.4px;line-height:10px;left:1408.50px;color:#000;font-weight:700;letter-spacing:0.220px;">Gesamtbetrag (Netto):</span>
<span class="t" style="top:690.00px;font-size:7.4px;line-height:10px;left:1408.50px;color:#000;font-weight:700;letter-spacing:0.365px;">MwSt.:</span>
<span class="t" style="top:699.00px;font-size:7.4px;line-height:10px;left:1408.50px;color:#000;font-weight:700;letter-spacing:0.208px;">Gesamt (Brutto):</span>
<span class="t" style="top:681.00px;font-size:7.4px;line-height:10px;right:151.81px;color:#000;font-weight:700;letter-spacing:0.394px;">384,60 €</span>
<span class="t" style="top:690.00px;font-size:7.4px;line-height:10px;right:151.82px;color:#000;font-weight:700;letter-spacing:0.378px;">73,07 €</span>
<span class="t" style="top:699.00px;font-size:7.4px;line-height:10px;right:151.81px;color:#000;font-weight:700;letter-spacing:0.394px;">457,67 €</span>
<span class="t" style="top:896.00px;font-size:7.6px;line-height:10px;left:1360.50px;color:#000;font-weight:700;letter-spacing:0.221px;">Cube GmbH</span>
<span class="t" style="top:909.00px;font-size:6.6px;line-height:9px;left:1360.50px;color:#000;letter-spacing:0.155px;">Kubus-Allee 234</span>
<span class="t" style="top:917.00px;font-size:6.6px;line-height:9px;left:1360.50px;color:#000;letter-spacing:0.189px;">20097 Hamburg</span>
<span class="t" style="top:892.00px;font-size:6.6px;line-height:9px;left:1514.90px;color:#000;letter-spacing:0.173px;">Telefon: +49 (0) 40 55 66 36 -0</span>
<span class="t" style="top:900.00px;font-size:6.6px;line-height:9px;left:1514.90px;color:#000;letter-spacing:0.142px;">Fax: +49 (0) 040 55 66 38 – 12</span>
<span class="t" style="top:916.00px;font-size:6.6px;line-height:9px;left:1514.90px;color:#000;letter-spacing:0.161px;"><a style="position:static;color:#0563c1;text-decoration:underline">info@cube.de</a> | <a style="position:static;color:#0563c1;text-decoration:underline">www.cube-solutions.de</a></span>
<span class="t" style="top:924.00px;font-size:6.6px;line-height:9px;left:1514.90px;color:#000;letter-spacing:0.158px;">USt.-ID: DE785560456</span>
<span class="t" style="top:892.00px;font-size:6.6px;line-height:9px;left:1668.90px;color:#000;font-weight:700;letter-spacing:0.203px;">Landesbank Baden-Württemberg</span>
<span class="t" style="top:900.00px;font-size:6.6px;line-height:9px;left:1668.90px;color:#000;letter-spacing:0.189px;">IBAN: DE02600501010002034304</span>
<span class="t" style="top:908.00px;font-size:6.6px;line-height:9px;left:1668.90px;color:#000;letter-spacing:0.228px;">BIC: SOLADEST600</span>
<span class="t" style="top:916.00px;font-size:6.6px;line-height:9px;left:1668.90px;color:#000;font-weight:700;letter-spacing:0.208px;">Hamburger Sparkasse</span>
<span class="t" style="top:924.00px;font-size:6.6px;line-height:9px;left:1668.90px;color:#000;letter-spacing:0.189px;">IBAN: DE02200505501015871393</span>
<span class="t" style="top:932.00px;font-size:6.6px;line-height:9px;left:1668.90px;color:#000;letter-spacing:0.230px;">BIC: HASPDEHH</span>
<div class="ui">
<footer style="left:6px;top:1010px;width:1215px;height:40px;background:rgba(55,68,82,0.94);border-radius:4px;box-shadow:0 0 0 1px rgba(255,255,255,0.5),0 1px 6px 1px rgba(0,0,0,0.14)">
<div class="tb g" style="left:736px;top:7px;width:32px;height:26px"><svg style="left:0px;top:0px" width="30" height="24" viewBox="0 0 30 24"><line x1="15" y1="5" x2="15" y2="19.3" stroke="#abe2ab" fill="none" stroke-width="1.6"/><circle cx="15" cy="4.6" r="1.1" fill="#abe2ab"/><line x1="8.6" y1="7" x2="21.4" y2="7" stroke="#abe2ab" fill="none" stroke-width="1.2"/><line x1="10.5" y1="19.6" x2="19.5" y2="19.6" stroke="#abe2ab" fill="none" stroke-width="1.3"/><path d="M10.2,7 L7.6,12.6 Q10.2,15 12.8,12.6 Z" stroke="#abe2ab" fill="none" stroke-width="1.1" stroke-linejoin="round"/><path d="M19.8,7 L17.2,12.6 Q19.8,15 22.4,12.6 Z" stroke="#abe2ab" fill="none" stroke-width="1.1" stroke-linejoin="round"/></svg></div>
<div class="tb g" style="left:776px;top:7px;width:32px;height:26px"><svg style="left:0px;top:0px" width="30" height="24" viewBox="0 0 30 24"><path d="M8.3,5.5 H21.2 Q21.9,5.5 21.9,6.2 V17.9 Q21.9,18.6 21.2,18.6 H10.6 L7.6,15.6 V6.2 Q7.6,5.5 8.3,5.5 Z" stroke="#abe2ab" fill="none" stroke-width="1.25" stroke-linejoin="round"/><path d="M11,5.8 V10.2 H18.5 V5.8" stroke="#abe2ab" fill="none" stroke-width="1.2"/><path d="M11.6,18.4 V13.6 H18.2 V18.4" stroke="#abe2ab" fill="none" stroke-width="1.2"/><rect x="13.1" y="15.2" width="1.6" height="2.4" fill="#abe2ab"/></svg></div>
<div class="tb" style="left:816px;top:7px;width:32px;height:26px"><svg style="left:0px;top:0px" width="30" height="24" viewBox="0 0 30 24"><line x1="14.9" y1="4" x2="14.9" y2="12.3" stroke="#d1e8ff" fill="none" stroke-width="1.2"/><polyline points="10.9,8.6 14.9,12.6 18.9,8.6" stroke="#d1e8ff" fill="none" stroke-width="1.3"/><path d="M10,14.6 H7.4 V19.6 H22.6 V14.6 H20" stroke="#d1e8ff" fill="none" stroke-width="1.3" stroke-linejoin="round"/><line x1="10.6" y1="17.2" x2="19.4" y2="17.2" stroke="#d1e8ff" fill="none" stroke-width="1.2"/></svg></div>
<div class="tb" style="left:858px;top:7px;width:32px;height:26px"><svg style="left:0px;top:0px" width="30" height="24" viewBox="0 0 30 24"><path d="M8,5 V16.2 L18.8,10.6 Z" stroke="#d1e8ff" fill="none" stroke-width="1.9" stroke-linejoin="round"/><line x1="16.6" y1="17" x2="23.6" y2="17" stroke="#d1e8ff" fill="none" stroke-width="1.2"/><line x1="20.1" y1="13.6" x2="20.1" y2="20.4" stroke="#d1e8ff" fill="none" stroke-width="1.2"/></svg></div>
<div class="tb" style="left:898px;top:7px;width:32px;height:26px"><svg style="left:0px;top:0px" width="30" height="24" viewBox="0 0 30 24"><rect x="11.3" y="5.6" width="7.4" height="3.6" stroke="#d1e8ff" fill="none" stroke-width="1.25"/><line x1="15" y1="9.2" x2="15" y2="12.4" stroke="#d1e8ff" fill="none" stroke-width="1.2"/><path d="M10.5,15.6 V12.4 H19.5 V15.6" stroke="#d1e8ff" fill="none" stroke-width="1.2"/><rect x="8.2" y="15.7" width="4.8" height="3.3" stroke="#d1e8ff" fill="none" stroke-width="1.25"/><rect x="17" y="15.7" width="4.8" height="3.3" stroke="#d1e8ff" fill="none" stroke-width="1.25"/></svg></div>
<div class="tb" style="left:938px;top:7px;width:32px;height:26px"><svg style="left:0px;top:0px" width="30" height="24" viewBox="0 0 30 24"><path d="M16.6,6.4 V5.2 Q16.6,4.5 15.9,4.5 H8.2 Q7.5,4.5 7.5,5.2 V15.6 Q7.5,16.3 8.2,16.3 H9.6" stroke="#d1e8ff" fill="none" stroke-width="1.25"/><path d="M13.6,10.4 V8.2 H22.4 V20 H13.6 V17.4" stroke="#d1e8ff" fill="none" stroke-width="1.25" stroke-linejoin="round"/><line x1="10.6" y1="13.8" x2="18.6" y2="13.8" stroke="#d1e8ff" fill="none" stroke-width="1.2"/><polyline points="15.8,10.6 19,13.8 15.8,17" stroke="#d1e8ff" fill="none" stroke-width="1.2"/></svg></div>
<div class="tb" style="left:978px;top:7px;width:32px;height:26px"><svg style="left:0px;top:0px" width="30" height="24" viewBox="0 0 30 24"><line x1="15" y1="4.6" x2="15" y2="16.4" stroke="#d1e8ff" fill="none" stroke-width="1.2"/><polyline points="10.8,8.8 15,4.6 19.2,8.8" stroke="#d1e8ff" fill="none" stroke-width="1.3"/><rect x="6.7" y="18.1" width="16.6" height="1.8" rx="0.6" fill="#d1e8ff"/></svg></div>
<div class="tb" style="left:1018px;top:7px;width:32px;height:26px"><svg style="left:0px;top:0px" width="30" height="24" viewBox="0 0 30 24"><g transform="translate(0,0.8)"><rect x="7.4" y="6.3" width="15.2" height="11.4" stroke="#d1e8ff" fill="none" stroke-width="1.3"/><polyline points="7.6,6.6 15,12.9 22.4,6.6" stroke="#d1e8ff" fill="none" stroke-width="1.0"/><line x1="7.6" y1="17.4" x2="13" y2="11.3" stroke="#d1e8ff" fill="none" stroke-width="0.9"/><line x1="22.4" y1="17.4" x2="17" y2="11.3" stroke="#d1e8ff" fill="none" stroke-width="0.9"/></g></svg></div>
<div class="tb" style="left:1058px;top:7px;width:32px;height:26px"><svg style="left:0px;top:0px" width="30" height="24" viewBox="0 0 30 24"><path d="M11.4,5.4 Q15,3.4 18.6,5.4" stroke="#d1e8ff" fill="none" stroke-width="1.1"/><line x1="7.2" y1="6" x2="22.8" y2="6" stroke="#d1e8ff" fill="none" stroke-width="1.3"/><path d="M8.8,8 L10.6,19.6 H19.4 L21.2,8 Z" stroke="#d1e8ff" fill="none" stroke-width="1.3" stroke-linejoin="round"/><line x1="13" y1="10" x2="13.4" y2="17.4" stroke="#d1e8ff" fill="none" stroke-width="1"/><line x1="15" y1="10" x2="15" y2="17.4" stroke="#d1e8ff" fill="none" stroke-width="1"/><line x1="17" y1="10" x2="16.6" y2="17.4" stroke="#d1e8ff" fill="none" stroke-width="1"/></svg></div>
<div class="tb" style="left:1098px;top:7px;width:32px;height:26px"><svg style="left:0px;top:0px" width="30" height="24" viewBox="0 0 30 24"><path d="M12.6,6.2 L14.4,4.4 H21.4 Q22,4.4 22,5 V15.6 Q22,16.2 21.4,16.2 H19.6" stroke="#d1e8ff" fill="none" stroke-width="1.2" stroke-linejoin="round"/><path d="M11.6,7.6 H18.4 Q19,7.6 19,8.2 V19 Q19,19.6 18.4,19.6 H8.6 Q8,19.6 8,19 V11.2 Z" stroke="#d1e8ff" fill="none" stroke-width="1.3" stroke-linejoin="round"/><polygon points="11.8,7.8 11.8,11.4 8.2,11.4" fill="#d1e8ff"/><line x1="10.4" y1="14.4" x2="16.6" y2="14.4" stroke="#d1e8ff" fill="none" stroke-width="1.1"/><line x1="10.4" y1="16.8" x2="16.6" y2="16.8" stroke="#d1e8ff" fill="none" stroke-width="1.1"/></svg></div>
<div class="tb" style="left:1138px;top:7px;width:32px;height:26px"><svg style="left:0px;top:0px" width="30" height="24" viewBox="0 0 30 24"><rect x="8.4" y="5.6" width="13.4" height="12.8" stroke="#d1e8ff" fill="none" stroke-width="1.5"/><line x1="12.9" y1="5.6" x2="12.9" y2="18.4" stroke="#d1e8ff" fill="none" stroke-width="1.5"/><line x1="17.4" y1="5.6" x2="17.4" y2="18.4" stroke="#d1e8ff" fill="none" stroke-width="1.5"/><line x1="8.4" y1="9.9" x2="21.8" y2="9.9" stroke="#d1e8ff" fill="none" stroke-width="1.5"/><line x1="8.4" y1="14.2" x2="21.8" y2="14.2" stroke="#d1e8ff" fill="none" stroke-width="1.5"/></svg></div>
<div class="tb" style="left:1178px;top:7px;width:32px;height:26px"><svg style="left:0px;top:0px" width="30" height="24" viewBox="0 0 30 24"><path d="M7.9,10.4 A7.3,7.3 0 0 1 21.7,9.2" stroke="#d1e8ff" fill="none" stroke-width="1.3"/><polygon points="23.3,5.2 23.3,10.3 18.4,9.7" fill="#d1e8ff"/><path d="M22.1,14.3 A7.3,7.3 0 0 1 8.3,15.5" stroke="#d1e8ff" fill="none" stroke-width="1.3"/><polygon points="6.7,19.5 6.7,14.4 11.6,15.0" fill="#d1e8ff"/></svg></div>
</footer>
<div class="badge" style="left:696px;top:996px"></div>
<span class="t" style="top:996.00px;font-size:30.5px;line-height:40px;left:216.00px;width:1000px;text-align:center;color:#fff;"><span>1</span></span>
<div class="badge" style="left:217px;top:167px"></div>
<span class="t" style="top:167.00px;font-size:30.5px;line-height:40px;left:-263.00px;width:1000px;text-align:center;color:#fff;"><span>2</span></span>
<div class="badge" style="left:330.7px;top:225px"></div>
<span class="t" style="top:225.00px;font-size:30.5px;line-height:40px;left:-149.30px;width:1000px;text-align:center;color:#fff;"><span>3</span></span>
<div class="badge" style="left:461px;top:225px"></div>
<span class="t" style="top:225.00px;font-size:30.5px;line-height:40px;left:-19.00px;width:1000px;text-align:center;color:#fff;"><span>4</span></span>
<div class="badge" style="left:549.7px;top:225px"></div>
<span class="t" style="top:225.00px;font-size:30.5px;line-height:40px;left:69.70px;width:1000px;text-align:center;color:#fff;"><span>5</span></span>
<div class="badge" style="left:633px;top:225px"></div>
<span class="t" style="top:225.00px;font-size:30.5px;line-height:40px;left:153.00px;width:1000px;text-align:center;color:#fff;"><span>6</span></span>
<div class="badge" style="left:1534px;top:543px"></div>
<span class="t" style="top:543.00px;font-size:30.5px;line-height:40px;left:1054.00px;width:1000px;text-align:center;color:#fff;"><span>7</span></span>
<div class="badge" style="left:1876px;top:22px"></div>
<span class="t" style="top:22.00px;font-size:30.5px;line-height:40px;left:1396.00px;width:1000px;text-align:center;color:#fff;"><span>8</span></span>
</div>
</body>
</html>
